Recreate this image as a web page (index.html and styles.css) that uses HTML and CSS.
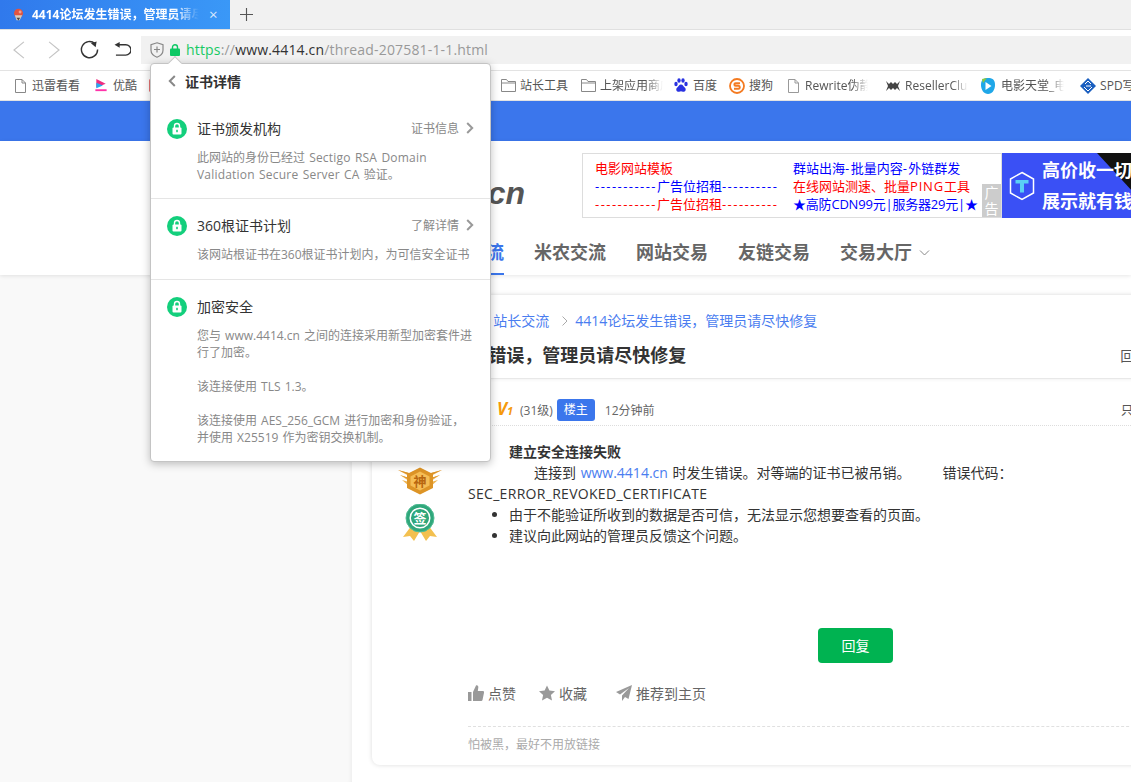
FILE: index.html
```html
<!DOCTYPE html>
<html lang="zh-CN">
<head>
<meta charset="utf-8">
<title>4414论坛发生错误，管理员请尽快修复</title>
<link rel="stylesheet" href="styles.css">
</head>
<body>
<div class="tabbar">
  <div class="tab">
    <svg class="favicon" viewBox="0 0 16 16"><circle cx="8" cy="6.500" r="5.500" fill="#e2543f"/><path d="M3.500 9h9l-3 6h-4z" fill="#d9cdbd"/><path d="M5.500 12l2.500 3.500 2-3.500z" fill="#4d4440"/><circle cx="10" cy="5" r="1.800" fill="#f2a08c"/></svg>
    <span class="tab-title">4414论坛发生错误，管理员请尽快修复</span>
    <span class="tab-close">×</span>
  </div>
  <svg class="newtab" viewBox="0 0 14 14"><path d="M7 0v14M0 7h14" stroke="#555" stroke-width="1.200" fill="none"/></svg>
</div>
<div class="toolbar">
  <div class="navs">
    <svg class="nav-ic" viewBox="0 0 14 20"><path d="M13 1L2 10l11 9" class="st-light"/></svg>
    <svg class="nav-ic fwd" viewBox="0 0 14 20"><path d="M1 1l11 9-11 9" class="st-light"/></svg>
    <svg class="nav-reload" viewBox="0 0 20 20"><path d="M15.800 3.900A8.500 8.500 0 1 0 18.500 10" class="st-dark"/><path d="M11.500 3.500l6-1.800-1 6z" fill="#333"/></svg>
    <svg class="nav-undo" viewBox="0 0 18 16"><path d="M5 3h7.500a5 5 0 0 1 0 11H2" class="st-dark"/><path d="M6 0L0.500 3 6 6z" fill="#333"/></svg>
  </div>
  <div class="addr">
    <svg class="shield" viewBox="0 0 14 16"><path d="M7 .8l6 2v5.400c0 3.400-2.600 5.600-6 7-3.400-1.400-6-3.600-6-7V2.800z" fill="none" stroke="#888" stroke-width="1.200"/><path d="M7 4.500v6M4 7.500h6" stroke="#888" stroke-width="1.200"/></svg>
    <svg class="lock" viewBox="0 0 10 12"><rect x="0" y="4.500" width="10" height="7.500" rx="1" fill="#0cc864"/><path d="M2.500 5V3.200a2.500 2.500 0 0 1 5 0V5" fill="none" stroke="#0cc864" stroke-width="1.400"/></svg>
    <span class="url"><span class="url-green">https</span><span class="url-gray">://</span><span class="url-dark">www.4414.cn</span><span class="url-gray">/thread-207581-1-1.html</span></span>
  </div>
</div>
<div class="bookmarks">
  <div class="bm bm-first">
    <svg class="bm-doc" viewBox="0 0 11 14"><path d="M.5.5h6.500l3.500 3.500v9.500H.5zM7 .5v3.500h3.500" fill="none" stroke="#888"/></svg><span>迅雷看看</span>
  </div>
  <div class="bm bm-youku">
    <svg class="bm-ic" viewBox="0 0 14 16"><path d="M2 1l10 5-10 4z" fill="#ee2d80"/><path d="M2 5l7 3-7 3z" fill="#27a9f1"/><rect x="1" y="12" width="12" height="2" fill="#f3a"/></svg><span>优酷</span>
  </div>
  <div class="bm bm-red"><svg class="bm-ic" viewBox="0 0 14 16"><rect width="14" height="16" rx="3" fill="#d50a0a"/></svg><span>网易</span></div>
  <div class="bm bm-tools">
    <svg class="bm-folder" viewBox="0 0 15 13"><path d="M.5 12.500V.5h5l1.500 2h7.500v10zM.5 4h14" fill="none" stroke="#888"/></svg><span>站长工具</span>
  </div>
  <div class="bm bm-gap">
    <svg class="bm-folder" viewBox="0 0 15 13"><path d="M.5 12.500V.5h5l1.500 2h7.500v10zM.5 4h14" fill="none" stroke="#888"/></svg><span class="fade">上架应用商店</span>
  </div>
  <div class="bm bm-baidu">
    <svg class="bm-ic" viewBox="0 0 14 15"><g fill="#2932e1"><ellipse cx="2" cy="6" rx="1.700" ry="2.200"/><ellipse cx="5" cy="2.500" rx="1.700" ry="2.200"/><ellipse cx="9" cy="2.500" rx="1.700" ry="2.200"/><ellipse cx="12" cy="6" rx="1.700" ry="2.200"/><path d="M7 6.500c2 0 2.500 2 4 3.200 1.500 1.500.5 4.500-2 4-1-.2-1.500-.4-2-.4s-1 .2-2 .4c-2.500.5-3.500-2.500-2-4C4.500 8.500 5 6.500 7 6.500z"/></g></svg><span>百度</span>
  </div>
  <div class="bm bm-sogou">
    <svg class="bm-ic-l" viewBox="0 0 16 16"><circle cx="8" cy="8" r="7" fill="none" stroke="#f47a20" stroke-width="1.800"/><path d="M11 5.200H6.500c-1.500 0-1.500 2.500 0 2.500h3c1.700 0 1.700 3 0 3H5" fill="none" stroke="#f47a20" stroke-width="2"/></svg><span>搜狗</span>
  </div>
  <div class="bm bm-rewrite">
    <svg class="bm-doc" viewBox="0 0 11 14"><path d="M.5.5h6.500l3.500 3.500v9.500H.5zM7 .5v3.500h3.500" fill="none" stroke="#999"/></svg><span class="fade">Rewrite伪静态规则</span>
  </div>
  <div class="bm bm-reseller">
    <svg class="bm-ic-l" viewBox="0 0 16 12"><path d="M1 1l3 3 2-2 2 2 2-2 2 2 3-3-2 5 2 5-3-3-2 2-2-2-2 2-2-2-3 3 2-5z" fill="#444"/></svg><span class="fade">ResellerClub</span>
  </div>
  <div class="bm bm-movie">
    <svg class="bm-ic-l bm-tall" viewBox="0 0 16 18"><path d="M8 1c4 0 7 1 7 7 0 5-3 9-7 9S1 13 1 8c0-6 3-7 7-7z" fill="#1fa7e8"/><path d="M5.500 5l6 4-6 4z" fill="#fff"/><path d="M2 2l5-1-4 5z" fill="#8cc83c"/></svg><span class="fade">电影天堂_电影</span>
  </div>
  <div class="bm bm-spd">
    <svg class="bm-ic-l" viewBox="0 0 16 16"><path d="M8 0l8 8-8 8-8-8z" fill="#1a5fc0"/><path d="M5 6l3-3 3 3M4 9l4 4 4-4M6 8h5" stroke="#fff" fill="none"/></svg><span>SPD写作</span>
  </div>
</div>
<div class="site-bar"></div>
<header class="site-header">
  <div class="head-top">
    <div class="logo">4414.cn</div>
    <div class="ad-box">
      <div class="ad-col ad-col-a">
        <div class="red">电影网站模板</div>
        <div class="blue"><span class="dash">-----------</span>广告位招租<span class="dash">----------</span></div>
        <div class="red"><span class="dash">-----------</span>广告位招租<span class="dash">----------</span></div>
      </div>
      <div class="ad-col ad-col-b">
        <div class="blue">群站出海<span class="dash">-</span>批量内容<span class="dash">-</span>外链群发</div>
        <div class="red">在线网站测速、批量<span class="wide">PING</span>工具</div>
        <div class="blue tight">★高防CDN99元|服务器29元|★</div>
      </div>
      <div class="ad-tag">广告</div>
    </div>
    <div class="ad-banner">
      <svg class="ad-hex" viewBox="0 0 26 30"><path d="M13 1.500l11.500 6.500v14L13 28.500 1.500 22V8z" fill="none" stroke="#fff" stroke-width="1.500"/><path d="M6.500 9h13v3.500h-4.500v9h-4v-9H6.500z" fill="#5ad0f5"/></svg>
      <div class="ad-words"><div>高价收一切</div><div>展示就有钱</div></div>
    </div>
  </div>
  <nav class="site-nav">
    <a class="nav-item active">站长交流</a>
    <a class="nav-item">米农交流</a>
    <a class="nav-item">网站交易</a>
    <a class="nav-item">友链交易</a>
    <a class="nav-item">交易大厅<svg class="nav-caret" viewBox="0 0 10 6"><path d="M.5.500L5 5 9.500.5" fill="none" stroke="#888"/></svg></a>
  </nav>
</header>
<main class="main">
  <aside class="sidebar"></aside>
  <section class="content">
    <article class="card">
      <div class="thread-head">
        <div class="crumbs"><a>首页</a><i>›</i><a>站长交流</a><i class="crumb-sep"><svg viewBox="0 0 6 10"><path d="M.5.500L5 5 .5 9.500" fill="none" stroke="#aaa"/></svg></i><a>4414论坛发生错误，管理员请尽快修复</a></div>
        <div class="title-row"><h1>4414论坛发生错误，管理员请尽快修复</h1><span class="title-side">回复 12</span></div>
      </div>
      <div class="meta">
        <span class="vip">V<small>1</small></span>
        <span class="level">(31级)</span>
        <span class="owner">楼主</span>
        <span class="time">12分钟前</span>
        <span class="only">只看楼主</span>
      </div>
      <div class="post">
        <div class="author">
          <svg class="badge" viewBox="0 0 44 28">
            <path d="M0 3l11 3v3zM2 8l9 3v3zM4 13l7 2v4zM44 3L33 6v3zM42 8l-9 3v3zM40 13l-7 2v4z" fill="#efb552"/>
            <path d="M0 3l11 3v2zM2 8l9 3v1.500zM44 3L33 6v2zM42 8l-9 3v1.500z" fill="#d9902a"/>
            <path d="M22 .5L35 7v14l-13 6.500L9 21V7z" fill="#dd9426"/>
            <path d="M22 4.500L31.500 9.500v9L22 23.500l-9.500-5v-9z" fill="#f5bd55"/>
            <text x="22" y="18.500" class="badge-text gold">神</text>
          </svg>
          <svg class="badge-sign" viewBox="0 0 36 37">
            <path d="M10 21L1 33l7-1 4 5 6-10zM26 21l9 12-7-1-4 5-6-10z" fill="#f3c04f"/>
            <circle cx="18" cy="14" r="14" fill="#2fa77b" stroke="#52bd95" stroke-width="1"/>
            <circle cx="18" cy="14" r="9.800" fill="none" stroke="#fff" stroke-width="1.500"/>
            <text x="18" y="19" class="badge-text white">签</text>
          </svg>
        </div>
        <div class="post-body">
          <div class="post-h">建立安全连接失败</div>
          <div class="post-p">连接到 <a>www.4414.cn</a> 时发生错误。对等端的证书已被吊销。<span class="err">错误代码：</span></div>
          <div class="err-code">SEC_ERROR_REVOKED_CERTIFICATE</div>
          <ul>
            <li>由于不能验证所收到的数据是否可信，无法显示您想要查看的页面。</li>
            <li>建议向此网站的管理员反馈这个问题。</li>
          </ul>
          <button class="reply">回复</button>
          <div class="actions">
            <span class="action a-like"><svg viewBox="0 0 16 16"><path d="M0 7h3.500v9H0zM5 7l3-6.500c1.500-.5 2.500.5 2.300 2L9.800 6H15c1 0 1.200 1 1 1.800L14.500 15c-.2.700-.6 1-1.300 1H5z"/></svg>点赞</span>
            <span class="action a-star"><svg viewBox="0 0 16 16"><path d="M8 .5l2.400 5 5.600.7-4.100 3.800 1.100 5.500L8 12.800 3 15.500 4.100 10 0 6.200l5.600-.7z"/></svg>收藏</span>
            <span class="action a-send"><svg viewBox="0 0 16 16"><path d="M16 0L0 7l4 2.500L13 3 6 10.500V16l3-4 3.500 2z"/></svg>推荐到主页</span>
          </div>
          <div class="sign">怕被黑，最好不用放链接</div>
        </div>
      </div>
    </article>
  </section>
</main>
<div class="pop">
  <div class="pop-arrow"></div>
  <div class="pop-head">
    <svg class="pop-back" viewBox="0 0 8 12"><path d="M6.800 1L1.800 6l5 5" fill="none" stroke="#888" stroke-width="2"/></svg>
    <b>证书详情</b>
  </div>
  <section class="cert cert-first">
    <div class="cert-row">
      <svg class="cert-ic" viewBox="0 0 20 20"><circle cx="10" cy="10" r="10" fill="#13cf7c"/><rect x="5.500" y="8.500" width="9" height="7" rx="1" fill="#fff"/><path d="M7.500 9V7a2.500 2.500 0 0 1 5 0v2" fill="none" stroke="#fff" stroke-width="1.400"/><rect x="9.200" y="10.800" width="1.600" height="2.400" fill="#13cf7c"/></svg>
      <span class="cert-name">证书颁发机构</span>
      <span class="cert-link">证书信息<svg viewBox="0 0 8 12"><path d="M1.200 1l5 5-5 5" fill="none" stroke="#999" stroke-width="2"/></svg></span>
    </div>
    <p>此网站的身份已经过 <span class="lat">Sectigo RSA Domain</span><br><span class="lat">Validation Secure Server CA</span> 验证。</p>
  </section>
  <section class="cert">
    <div class="cert-row">
      <svg class="cert-ic" viewBox="0 0 20 20"><circle cx="10" cy="10" r="10" fill="#13cf7c"/><rect x="5.500" y="8.500" width="9" height="7" rx="1" fill="#fff"/><path d="M7.500 9V7a2.500 2.500 0 0 1 5 0v2" fill="none" stroke="#fff" stroke-width="1.400"/><rect x="9.200" y="10.800" width="1.600" height="2.400" fill="#13cf7c"/></svg>
      <span class="cert-name">360根证书计划</span>
      <span class="cert-link">了解详情<svg viewBox="0 0 8 12"><path d="M1.200 1l5 5-5 5" fill="none" stroke="#999" stroke-width="2"/></svg></span>
    </div>
    <p>该网站根证书在360根证书计划内，为可信安全证书</p>
  </section>
  <section class="cert cert-last">
    <div class="cert-row">
      <svg class="cert-ic" viewBox="0 0 20 20"><circle cx="10" cy="10" r="10" fill="#13cf7c"/><rect x="5.500" y="8.500" width="9" height="7" rx="1" fill="#fff"/><path d="M7.500 9V7a2.500 2.500 0 0 1 5 0v2" fill="none" stroke="#fff" stroke-width="1.400"/><rect x="9.200" y="10.800" width="1.600" height="2.400" fill="#13cf7c"/></svg>
      <span class="cert-name">加密安全</span>
    </div>
    <p>您与 www.4414.cn 之间的连接采用新型加密套件进<br>行了加密。<br><br>该连接使用 TLS 1.3。<br><br>该连接使用 AES_256_GCM 进行加密和身份验证，<br>并使用 X25519 作为密钥交换机制。</p>
  </section>
</div>
</body>
</html>
```
FILE: styles.css
```css
* { box-sizing: border-box; }
html, body { margin: 0; padding: 0; height: 782px; overflow: hidden; }
body { position: relative; background: #fff; color: #333; font-family: "Open Sans", "Noto Sans CJK SC", sans-serif; font-size: 14px; }
a { color: inherit; text-decoration: none; }

.tabbar { display: flex; align-items: center; height: 30px; background: #f1f1f1; border-bottom: 1px solid #e0e0e0; }
.tab { display: flex; align-items: center; width: 230px; height: 29px; padding: 0 12px; background: linear-gradient(90deg, #3079ec, #3a98f7); color: #fff; }
.favicon { width: 13px; height: 15px; flex: none; margin-right: 7px; }
.tab-title { width: 167px; flex: none; font-size: 12px; font-weight: 700; line-height: 29px; white-space: nowrap; overflow: hidden; -webkit-mask-image: linear-gradient(90deg, #000 85%, transparent); mask-image: linear-gradient(90deg, #000 85%, transparent); }
.tab-close { margin-left: 10px; font-size: 15px; line-height: 29px; color: #d7e8fc; }
.newtab { width: 13px; height: 13px; margin-left: 10px; }

.toolbar { display: flex; align-items: center; height: 41px; background: #fff; border-bottom: 1px solid #e3e3e3; padding-bottom: 1px; }
.navs { display: flex; align-items: center; width: 141px; flex: none; padding-left: 12px; }
.nav-ic { width: 13px; height: 18px; }
.nav-ic.fwd { margin-left: 23px; }
.nav-reload { width: 19px; height: 19px; margin-left: 19px; }
.nav-undo { width: 17px; height: 15px; margin-left: 15px; }
.st-light { fill: none; stroke: #c4c4c4; stroke-width: 1.300; }
.st-dark { fill: none; stroke: #333; stroke-width: 1.500; }
.addr { display: flex; align-items: center; flex: 1; height: 28px; background: #f1f1f1; padding-left: 9px; }
.shield { width: 14px; height: 16px; flex: none; }
.lock { width: 10px; height: 12px; margin-left: 6px; flex: none; }
.url { margin-left: 6px; font-size: 14px; line-height: 28px; letter-spacing: .17px; white-space: nowrap; }
.url-green { color: #17c964; }
.url-gray { color: #999; }
.url-dark { color: #333; }

.bookmarks { display: flex; align-items: center; height: 30px; padding-left: 15px; background: #fff; border-bottom: 1px solid #e3e3e3; font-size: 12px; color: #555; white-space: nowrap; overflow: hidden; }
.bm { display: flex; align-items: center; flex: none; line-height: 29px; }
.bm-doc { width: 11px; height: 14px; margin-right: 6px; flex: none; }
.bm-folder { width: 15px; height: 13px; margin-right: 4px; flex: none; }
.bm-ic { width: 14px; height: 15px; margin-right: 5px; flex: none; }
.bm-ic-l { width: 16px; height: 16px; margin-right: 4px; flex: none; }
.bm-tall { height: 18px; margin-right: 5px; }
.fade { display: block; width: 63px; overflow: hidden; -webkit-mask-image: linear-gradient(90deg, #000 75%, transparent); mask-image: linear-gradient(90deg, #000 75%, transparent); }
.bm-youku { margin-left: 14px; }
.bm-red { margin-left: 12px; }
.bm-tools { margin-left: 309px; }
.bm-gap { margin-left: 13px; }
.bm-baidu { margin-left: 11px; }
.bm-sogou { margin-left: 12px; }
.bm-rewrite { margin-left: 15px; }
.bm-reseller { margin-left: 17px; }
.bm-movie { margin-left: 12px; }
.bm-spd { margin-left: 16px; }

.site-bar { height: 40px; background: #3b76ec; }
.site-header { position: relative; z-index: 1; height: 134px; padding-left: 372px; background: #fff; box-shadow: 0 1px 4px rgba(0,0,0,.1); }
.head-top { display: flex; height: 84px; padding-top: 12px; }
.logo { width: 210px; flex: none; padding: 21px 57px 0 0; text-align: right; font-size: 32px; line-height: 38px; font-weight: 700; font-style: italic; color: #555; font-family: "Liberation Sans", sans-serif; }
.ad-box { position: relative; display: flex; width: 420px; height: 65px; flex: none; border: 1px solid #ddd; font-size: 13px; line-height: 18px; white-space: nowrap; }
.ad-col { padding-top: 5px; }
.ad-col-a { width: 210px; padding-left: 12px; flex: none; }
.dash { letter-spacing: 1.450px; }
.wide { letter-spacing: .8px; }
.tight { letter-spacing: -.2px; }
.red { color: #f00; }
.blue { color: #00f; }
.ad-tag { position: absolute; right: 0; bottom: 0; width: 19px; height: 33px; background: #ccc; color: #fff; font-size: 14px; line-height: 16px; text-align: center; padding-top: 1px; white-space: normal; }
.ad-banner { position: relative; display: flex; align-items: center; width: 200px; height: 65px; flex: none; background: #3a50f5; color: #fff; overflow: hidden; }
.ad-banner::after { content: ""; position: absolute; left: 95px; top: 0; width: 60px; height: 65px; background: #111; clip-path: polygon(0 0, 100% 0, 100% 100%); }
.ad-hex { width: 26px; height: 30px; margin-left: 7px; flex: none; }
.ad-words { position: relative; z-index: 1; margin-left: 7px; font-size: 18px; line-height: 31px; font-weight: 700; white-space: nowrap; }
.site-nav { display: flex; gap: 30px; padding-left: 60px; height: 50px; }
.nav-item { display: flex; align-items: center; height: 50px; padding-top: 4px; font-size: 18px; font-weight: 700; color: #666; border-bottom: 2px solid transparent; }
.nav-item.active { color: #3b76ec; border-bottom-color: #3b76ec; }
.nav-caret { width: 11px; height: 6px; margin: 4px 0 0 7px; }

.main { display: flex; height: 507px; }
.sidebar { width: 352px; flex: none; background: #f9f9f9; box-shadow: inset -4px 0 4px -3px rgba(0,0,0,.06); }
.content { flex: 1; min-width: 0; padding: 20px 0 0 20px; background: #fff; overflow: hidden; }
.card { width: 813px; height: 470px; border-radius: 8px; background: #fff; box-shadow: 0 0 5px rgba(0,0,0,.14); }
.thread-head { height: 84px; padding: 17px 17px 0 3px; border-bottom: 1px solid #e8e8e8; box-shadow: 0 1px 3px rgba(0,0,0,.05); }
.crumbs { display: flex; align-items: center; height: 18px; font-size: 14px; line-height: 18px; color: #4a7df0; white-space: nowrap; gap: 13px; }
.crumbs i { font-style: normal; color: #aaa; }
.crumbs .crumb-sep { margin-right: -6px; }
.crumb-sep svg { display: block; width: 6px; height: 10px; }
.crumbs a:first-child { margin-left: 60px; }
.title-row { display: flex; align-items: center; margin-top: 12px; height: 26px; }
.title-row h1 { margin: 0; font-size: 18px; line-height: 26px; font-weight: 700; color: #333; white-space: nowrap; }
.title-side { margin-left: auto; font-size: 14px; color: #555; white-space: nowrap; }
.meta { display: flex; align-items: center; height: 47px; padding: 20px 16px 4px 125px; border-bottom: 1px dotted #ddd; font-size: 12px; color: #666; }
.vip { width: 23px; font-size: 17px; line-height: 22px; font-weight: 700; font-style: italic; color: #f59a0c; }
.vip small { font-size: 11px; }
.owner { width: 38px; height: 22px; margin-left: 4px; border-radius: 3px; background: #3b76ec; color: #fff; text-align: center; line-height: 22px; }
.time { margin-left: 10px; }
.only { margin-left: auto; color: #555; }
.post { display: flex; }
.author { display: flex; flex-direction: column; align-items: center; width: 96px; flex: none; padding-top: 41px; }
.badge { display: block; width: 44px; height: 28px; flex: none; }
.badge-sign { display: block; width: 36px; height: 37px; margin-top: 9px; flex: none; }
.badge-text { font-size: 13px; font-weight: 700; text-anchor: middle; font-family: "Noto Sans CJK SC", sans-serif; }
.gold { fill: #b8660f; }
.white { fill: #fff; }
.post-body { flex: 1; padding: 15px 16px 0 0; font-size: 14px; line-height: 21px; color: #333; }
.post-h { padding-left: 41px; font-weight: 700; }
.post-p { padding-left: 66px; word-spacing: 1px; }
.post-p a { color: #4a7df0; }
.err { margin-left: 32px; }
.err-code { letter-spacing: .3px; }
.post-body ul { margin: 0; padding: 0 0 0 41px; }
.reply { display: block; width: 75px; height: 35px; margin: 82px 0 0 350px; padding: 0; border: 0; border-radius: 4px; background: #00b351; color: #fff; font: inherit; }
.actions { display: flex; align-items: center; height: 20px; margin-top: 20px; color: #666; }
.action { display: flex; align-items: center; white-space: nowrap; }
.action svg { width: 16px; height: 16px; margin-right: 4px; fill: #999; flex: none; }
.a-star { margin-left: 23px; }
.a-send { margin-left: 29px; }
.sign { margin-top: 23px; padding-top: 9px; border-top: 1px dashed #e0e0e0; font-size: 12px; line-height: 18px; color: #aaa; }

.pop { position: absolute; left: 150px; top: 63px; z-index: 5; width: 341px; height: 399px; background: #fff; border: 1px solid #c4c4c4; border-radius: 4px; box-shadow: 0 2px 8px rgba(0,0,0,.25); color: #333; }
.pop-arrow { position: absolute; left: 19px; top: -6px; width: 10px; height: 10px; background: #fff; border: 1px solid #c4c4c4; border-right: 0; border-bottom: 0; transform: rotate(45deg); }
.pop-head { position: relative; display: flex; align-items: center; height: 34px; padding-left: 17px; font-size: 14px; }
.pop-back { width: 8px; height: 12px; margin-right: 9px; }
.cert { padding: 17px 16px 16px 16px; border-bottom: 1px solid #e5e5e5; }
.cert-first { padding-top: 21px; padding-bottom: 15px; }
.cert-last { border-bottom: 0; }
.cert-row { display: flex; align-items: center; height: 20px; }
.cert-ic { width: 20px; height: 20px; margin-right: 10px; flex: none; }
.cert-name { margin-top: -2px; font-size: 14px; color: #333; }
.cert-link { display: flex; align-items: center; margin-top: -2px; margin-left: auto; font-size: 12px; color: #888; }
.cert-link svg { width: 8px; height: 12px; margin-left: 7px; }
.cert p { margin: 10px 0 0 30px; font-size: 12px; line-height: 17px; color: #888; word-spacing: 1px; white-space: nowrap; }
.lat { letter-spacing: .2px; }
```
